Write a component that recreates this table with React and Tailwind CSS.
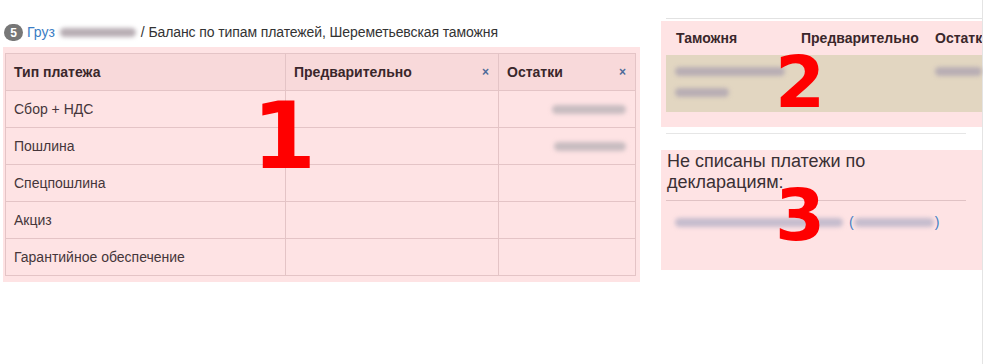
import React from "react";

const font = { fontFamily: '"Liberation Sans", Arial, sans-serif' };
const markFont = { fontFamily: '"DejaVu Sans", Verdana, sans-serif' };

function Blur({ w, className = "" }) {
  // masked value placeholder
  return (
    <span
      className={`inline-block h-[9px] rounded-full bg-[#b8aeb4] blur-[2px] align-middle ${className}`}
      style={{ width: w }}
    />
  );
}

function Close() {
  return <span className="text-[12px] font-bold leading-none text-[#4d6a99]">×</span>;
}

const rows = [
  ["Сбор + НДС", 74],
  ["Пошлина", 72],
  ["Спецпошлина", 0],
  ["Акциз", 0],
  ["Гарантийное обеспечение", 0],
];

export default function App() {
  return (
    <div className="relative flex h-[364px] w-[983px] overflow-hidden bg-white text-[14px] text-[#333]" style={font}>
      {/* left column */}
      <div className="w-[661px] shrink-0">
        <div className="ml-[4px] mt-[24px] flex h-[17px] items-center">
          <span className="flex h-[17px] w-[19px] items-center justify-center rounded-full bg-[#777] text-[12px] font-bold text-white">5</span>
          <span className="ml-[4px] text-[#3b7dc4]">Груз</span>
          <Blur w={76} className="ml-[5px] bg-[#b7c8e3]" />
          <span className="ml-[5px] tracking-[-0.1px]">/ Баланс по типам платежей, Шереметьевская таможня</span>
        </div>
        <div className="ml-[3px] mt-[6px] w-[637px] bg-[#fee3e4] pb-[6px] pl-[2px] pt-[6px]">
          <table className="w-[631px] border-collapse text-[#45363a]">
            <thead>
              <tr className="h-[37px] bg-[#f8d9da] text-[#3a272b]">
                <th className="w-[280px] border border-[#e4c4c6] pl-[8px] text-left font-bold">Тип платежа</th>
                <th className="w-[213px] border border-[#e4c4c6] pl-[8px] pr-[9px] text-left font-bold">
                  <div className="flex items-center justify-between">
                    <span>Предварительно</span>
                    <Close />
                  </div>
                </th>
                <th className="border border-[#e4c4c6] pl-[8px] pr-[9px] text-left font-bold">
                  <div className="flex items-center justify-between">
                    <span>Остатки</span>
                    <Close />
                  </div>
                </th>
              </tr>
            </thead>
            <tbody>
              {rows.map(([name, w]) => (
                <tr key={name} className="h-[37px]">
                  <td className="border border-[#e4c4c6] pl-[8px]">{name}</td>
                  <td className="border border-[#e4c4c6]"></td>
                  <td className="border border-[#e4c4c6] pr-[9px] text-right">
                    {w ? <Blur w={w} className="bg-[#c8bcc0]" /> : null}
                  </td>
                </tr>
              ))}
            </tbody>
          </table>
        </div>
      </div>

      {/* right column */}
      <div className="w-[321px] shrink-0">
        <div className="ml-[5px] mt-[18px] h-px bg-[#e2e2e2]" />
        <div className="mt-[2px] h-[106px] bg-[#fee3e4] pl-[5px]">
          <div className="flex h-[34px] items-center whitespace-nowrap font-bold text-[#3a272b]">
            <span className="w-[135px] shrink-0 pl-[10px]">Таможня</span>
            <span className="w-[134px] shrink-0">Предварительно</span>
            <span>Остатки</span>
          </div>
          <div className="flex h-[57px] bg-[#e2d6c1] pt-[12px]">
            <div className="flex w-[269px] shrink-0 flex-col gap-[12px] pl-[9px]">
              <Blur w={110} className="bg-[#b3aaa0]" />
              <Blur w={54} className="bg-[#b3aaa0]" />
            </div>
            <Blur w={50} className="bg-[#b3aaa0]" />
          </div>
        </div>
        <div className="ml-[5px] mr-[16px] mt-[6px] h-px bg-[#e6e6e6]" />
        <div className="mt-[16px] h-[120px] bg-[#fee3e4] pl-[5px] pr-[16px]">
          <div className="w-[250px] pl-[1px] pt-[1px] text-[18px] leading-[21px] text-[#3a3034]">
            Не списаны платежи по декларациям:
          </div>
          <div className="mt-[7px] h-px bg-[#e0c2c4]" />
          <div className="mt-[11px] flex items-center pl-[9px] text-[#3b7dc4]">
            <Blur w={168} className="bg-[#c6bccd]" />
            <span className="ml-[6px]">(</span>
            <Blur w={80} className="bg-[#c6bccd]" />
            <span className="ml-[1px]">)</span>
          </div>
        </div>
      </div>
      <div className="w-px shrink-0 bg-[#e4e4e4]" />

      {/* region markers */}
      <span className="absolute left-[252px] top-[91px] text-[92px] font-bold leading-none text-[#ff0000]" style={markFont}>
        1
      </span>
      <span className="absolute left-[775px] top-[46px] text-[72px] font-bold leading-none text-[#ff0000]" style={markFont}>
        2
      </span>
      <span className="absolute left-[775px] top-[179px] text-[72px] font-bold leading-none text-[#ff0000]" style={markFont}>
        3
      </span>
    </div>
  );
}
